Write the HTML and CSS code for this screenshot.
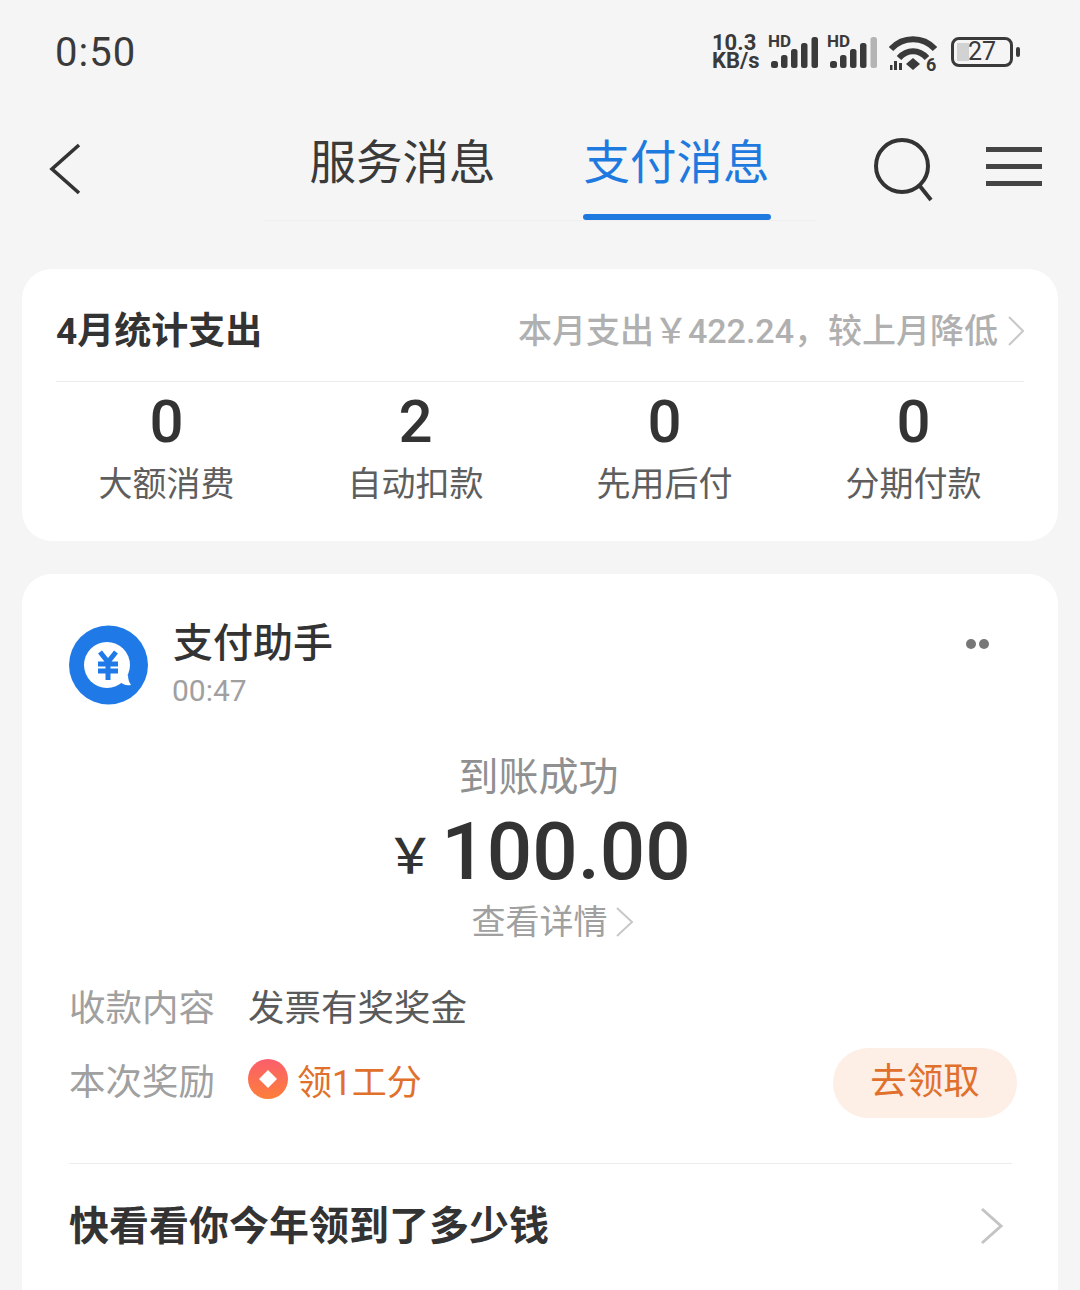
FILE: index.html
```html
<!DOCTYPE html>
<html lang="zh-CN">
<head>
  <meta charset="UTF-8"/>
  <meta name="viewport" content="width=device-width, initial-scale=1.0"/>
  <title>支付消息</title>
  <link rel="stylesheet" href="styles.css">
</head>
<body>
  <div class="status-bar">
    <span class="clock">0:50</span>
    <div class="status-icons">
      <div class="speed"><span>10.3</span><span>KB/s</span></div>
      <div class="signal">
        <span class="hd">HD</span>
        <svg width="48" height="32" viewBox="0 0 48 32">
          <rect x="0" y="24" width="7" height="7" rx="2.5" fill="#3a3a3a"/>
          <rect x="10" y="18" width="6.5" height="13" rx="2.5" fill="#3a3a3a"/>
          <rect x="20" y="12" width="6.5" height="19" rx="2.5" fill="#3a3a3a"/>
          <rect x="30" y="6" width="6.5" height="25" rx="2.5" fill="#3a3a3a"/>
          <rect x="40.5" y="0" width="6.5" height="31" rx="2.5" fill="#3a3a3a"/>
        </svg>
      </div>
      <div class="signal">
        <span class="hd">HD</span>
        <svg width="48" height="32" viewBox="0 0 48 32">
          <rect x="0" y="24" width="7" height="7" rx="2.5" fill="#3a3a3a"/>
          <rect x="10" y="18" width="6.5" height="13" rx="2.5" fill="#3a3a3a"/>
          <rect x="20" y="12" width="6.5" height="19" rx="2.5" fill="#3a3a3a"/>
          <rect x="30" y="6" width="6.5" height="25" rx="2.5" fill="#3a3a3a"/>
          <rect x="40.5" y="0" width="6.5" height="31" rx="2.5" fill="#b4b4b4"/>
        </svg>
      </div>
      <svg class="wifi" width="48" height="42" viewBox="0 0 48 42">
        <path d="M2 13 C14 0 34 0 46 13" fill="none" stroke="#3a3a3a" stroke-width="6"/>
        <path d="M10 22 C18 13 30 13 38 22" fill="none" stroke="#3a3a3a" stroke-width="6"/>
        <path d="M24 22 L31 28 L24 34 L17 28 Z" fill="#3a3a3a"/>
        <rect x="1" y="29" width="2.5" height="5" fill="#3a3a3a"/>
        <rect x="5" y="25" width="3" height="9" fill="#3a3a3a"/>
        <rect x="10" y="27" width="3" height="7" fill="#3a3a3a"/>
        <text x="37" y="35" class="wifi-six">6</text>
      </svg>
      <div class="battery">
        <div class="battery-body">
          <div class="battery-fill"></div>
          <span class="battery-num">27</span>
        </div>
        <div class="battery-tip"></div>
      </div>
    </div>
  </div>

  <div class="nav">
    <svg class="back" width="32" height="52" viewBox="0 0 32 52">
      <path d="M30 2 L3 26 L30 50" fill="none" stroke="#333" stroke-width="3.6"/>
    </svg>
    <div class="tabs">
      <div class="tab">服务消息</div>
      <div class="tab tab-active">支付消息</div>
    </div>
    <svg class="search" width="62" height="66" viewBox="0 0 62 66">
      <circle cx="29" cy="29" r="26" fill="none" stroke="#333" stroke-width="4"/>
      <path d="M46 48 L58 63" fill="none" stroke="#333" stroke-width="4"/>
    </svg>
    <div class="menu"><span></span><span></span><span></span></div>
  </div>

  <div class="card stats-card">
    <div class="stats-head">
      <span class="stats-title">4月统计支出</span>
      <span class="stats-note">本月支出￥422.24，较上月降低
        <svg class="note-arrow" width="16" height="30" viewBox="0 0 16 30"><path d="M1 1 L15 15 L1 29" fill="none" stroke="#c8c8c8" stroke-width="2"/></svg>
      </span>
    </div>
    <div class="stats-row">
      <div class="stat"><div class="stat-num">0</div><div class="stat-label">大额消费</div></div>
      <div class="stat"><div class="stat-num">2</div><div class="stat-label">自动扣款</div></div>
      <div class="stat"><div class="stat-num">0</div><div class="stat-label">先用后付</div></div>
      <div class="stat"><div class="stat-num">0</div><div class="stat-label">分期付款</div></div>
    </div>
  </div>

  <div class="card msg-card">
    <div class="msg-head">
      <svg class="avatar" width="79" height="80" viewBox="0 0 79 80">
        <circle cx="39.5" cy="40" r="39.5" fill="#1f7ae8"/>
        <circle cx="38" cy="40" r="23" fill="#fff"/>
        <path d="M50 56 C54 60 58 61 62 60 C60 57 59 54 59 50 Z" fill="#fff"/>
        <path d="M31 27 L39 37 L47 27 M29 39 H49 M29 46 H49 M39 37 V55" fill="none" stroke="#1f7ae8" stroke-width="5"/>
      </svg>
      <div class="msg-meta">
        <div class="msg-name">支付助手</div>
        <div class="msg-time">00:47</div>
      </div>
      <div class="dots"><span></span><span></span></div>
    </div>

    <div class="amount-block">
      <div class="amount-label">到账成功</div>
      <div class="amount"><span class="yen">￥</span>100.00</div>
      <div class="detail-link">查看详情
        <svg width="18" height="30" viewBox="0 0 18 30"><path d="M1 1 L16 15 L1 29" fill="none" stroke="#c8c8c8" stroke-width="2"/></svg>
      </div>
    </div>

    <div class="info-row">
      <span class="info-key">收款内容</span>
      <span class="info-val">发票有奖奖金</span>
    </div>
    <div class="info-row reward-row">
      <span class="info-key">本次奖励</span>
      <svg class="coin" width="40" height="40" viewBox="0 0 40 40">
        <defs>
          <linearGradient id="coinFill" x1="0" y1="0" x2="0" y2="1">
            <stop offset="0" stop-color="#fb5e6c"/>
            <stop offset="1" stop-color="#fd7f3a"/>
          </linearGradient>
        </defs>
        <circle cx="20" cy="20" r="20" fill="url(#coinFill)"/>
        <path d="M20 11 L29 20 L20 29 L11 20 Z" fill="#fff"/>
      </svg>
      <span class="reward-text">领1工分</span>
      <span class="reward-btn">去领取</span>
    </div>

    <div class="msg-foot">
      <span class="foot-text">快看看你今年领到了多少钱</span>
      <svg class="foot-arrow" width="24" height="38" viewBox="0 0 24 38"><path d="M2 2 L21 19 L2 36" fill="none" stroke="#c4c4c4" stroke-width="3"/></svg>
    </div>
  </div>
</body>
</html>
```

FILE: styles.css
```css
* {
  box-sizing: border-box;
}

html, body {
  height: 1290px;
  overflow: hidden;
}

body {
  margin: 0;
  background: #f5f5f5;
  color: #333;
  font-family: 'Roboto', 'Noto Sans CJK SC', sans-serif;
}

/* Status bar */
.status-bar {
  height: 104px;
  padding: 0 60px 0 55px;
  display: flex;
  justify-content: space-between;
  align-items: center;
}

.clock {
  font-size: 40px;
  letter-spacing: 1px;
  color: #3a3a3a;
}

.status-icons {
  display: flex;
  align-items: center;
  gap: 9px;
  color: #3a3a3a;
}

.speed {
  display: flex;
  flex-direction: column;
  font-size: 22px;
  font-weight: 700;
  line-height: 18px;
  width: 50px;
}

.signal {
  position: relative;
  width: 50px;
  height: 34px;
  display: flex;
  align-items: flex-end;
}

.hd {
  position: absolute;
  top: -1px;
  left: -3px;
  font-size: 17px;
  line-height: 15px;
  font-weight: 700;
}

.wifi {
  margin-top: 10px;
}

.wifi-six {
  font-family: 'Roboto', sans-serif;
  font-size: 18px;
  font-weight: 700;
  fill: #3a3a3a;
}

.battery {
  display: flex;
  align-items: center;
  gap: 3px;
  margin-left: 5px;
}

.battery-body {
  position: relative;
  width: 62px;
  height: 30px;
  border: 3px solid #3a3a3a;
  border-radius: 8px;
  text-align: center;
}

.battery-fill {
  position: absolute;
  left: 3px;
  top: 3px;
  bottom: 3px;
  width: 12px;
  background: #d2d2d2;
}

.battery-num {
  position: relative;
  font-size: 25px;
  line-height: 24px;
  display: block;
}

.battery-tip {
  width: 4px;
  height: 10px;
  border-radius: 2px;
  background: #3a3a3a;
}

/* Nav */
.nav {
  position: relative;
  height: 117px;
  padding: 0 38px 0 49px;
  display: flex;
  align-items: flex-start;
}

.back {
  margin-top: 39px;
}

.tabs {
  position: absolute;
  left: 265px;
  width: 551px;
  height: 117px;
  display: flex;
  justify-content: center;
  gap: 88px;
  padding-right: 2px;
  border-bottom: 1px solid #efefef;
}

.tab {
  position: relative;
  font-size: 46.5px;
  line-height: 58px;
  padding-top: 30px;
  color: #3a3a3a;
}

.tab-active {
  color: #1f7ae0;
}

.tab-active::after {
  content: "";
  position: absolute;
  left: -1px;
  right: -1px;
  bottom: 0;
  height: 6px;
  border-radius: 3px;
  background: #1f7ae0;
}

.search {
  margin-left: auto;
  margin-top: 33px;
}

.menu {
  margin-left: 51px;
  margin-top: 43px;
  width: 56px;
  display: flex;
  flex-direction: column;
  gap: 12px;
}

.menu span {
  height: 5px;
  background: #444;
}

/* Cards */
.card {
  background: #fff;
  border-radius: 30px;
  margin: 0 22px;
}

.stats-card {
  margin-top: 48px;
  height: 272px;
  padding: 0 34px;
}

.stats-head {
  height: 113px;
  padding-top: 6px;
  border-bottom: 1px solid #ececec;
  display: flex;
  justify-content: space-between;
  align-items: center;
}

.stats-title {
  font-size: 37px;
  font-weight: 700;
  color: #333;
}

.stats-note {
  display: flex;
  align-items: center;
  gap: 10px;
  font-size: 34px;
  font-weight: 500;
  color: #b0b0b0;
}

.note-arrow {
  margin-top: 5px;
}

.stats-row {
  display: grid;
  grid-template-columns: repeat(4, 1fr);
  margin: 0 -14px;
}

.stat {
  padding-top: 1px;
  text-align: center;
}

.stat-num {
  font-size: 60px;
  line-height: 77px;
  font-weight: 500;
  color: #333;
}

.stat-label {
  font-size: 34px;
  line-height: 49px;
  color: #5e5e5e;
}

.msg-card {
  margin-top: 33px;
  height: 760px;
  padding: 51px 46px 0 47px;
}

.msg-head {
  display: flex;
  align-items: flex-start;
}

.avatar {
  flex: none;
}

.msg-meta {
  margin-left: 25px;
  margin-top: -7px;
}

.msg-name {
  font-size: 40px;
  line-height: 52px;
  font-weight: 500;
  color: #333;
}

.msg-time {
  margin-left: -1px;
  font-size: 30px;
  line-height: 41px;
  color: #a0a0a0;
}

.dots {
  margin-left: auto;
  margin-right: 23px;
  margin-top: 14px;
  display: flex;
  gap: 3px;
}

.dots span {
  width: 10px;
  height: 10px;
  border-radius: 50%;
  background: #777;
}

.amount-block {
  margin-top: 41px;
  padding-right: 4px;
  text-align: center;
}

.amount-label {
  font-size: 40px;
  line-height: 52px;
  color: #909090;
}

.amount {
  font-size: 80px;
  line-height: 96px;
  font-weight: 500;
  color: #333;
}

.yen {
  font-size: 48px;
  margin-right: 7px;
  vertical-align: 6px;
}

.detail-link {
  margin-top: -5px;
  margin-left: 28px;
  display: flex;
  justify-content: center;
  align-items: center;
  gap: 8px;
  font-size: 34px;
  line-height: 44px;
  color: #a0a0a0;
}

.info-row {
  display: flex;
  align-items: center;
  margin-top: 31px;
  height: 60px;
  font-size: 36.5px;
}

.reward-row {
  margin-top: 9px;
  height: 70px;
}

.info-key {
  width: 179px;
  color: #a0a0a0;
}

.info-val {
  color: #5a5a5a;
}

.coin {
  flex: none;
}

.reward-text {
  margin-left: 9px;
  font-size: 35px;
  color: #e0702c;
}

.reward-btn {
  margin-left: auto;
  margin-right: -5px;
  margin-top: 7px;
  width: 184px;
  height: 70px;
  border-radius: 35px;
  background: #fdeee6;
  color: #e0702c;
  text-align: center;
  line-height: 68px;
}

.msg-foot {
  margin-top: 49px;
  height: 118px;
  border-top: 1px solid #ececec;
  display: flex;
  justify-content: space-between;
  align-items: center;
  padding-right: 8px;
}

.foot-text {
  font-size: 40px;
  font-weight: 700;
  color: #333;
}

.foot-arrow {
  margin-top: 6px;
}
```
